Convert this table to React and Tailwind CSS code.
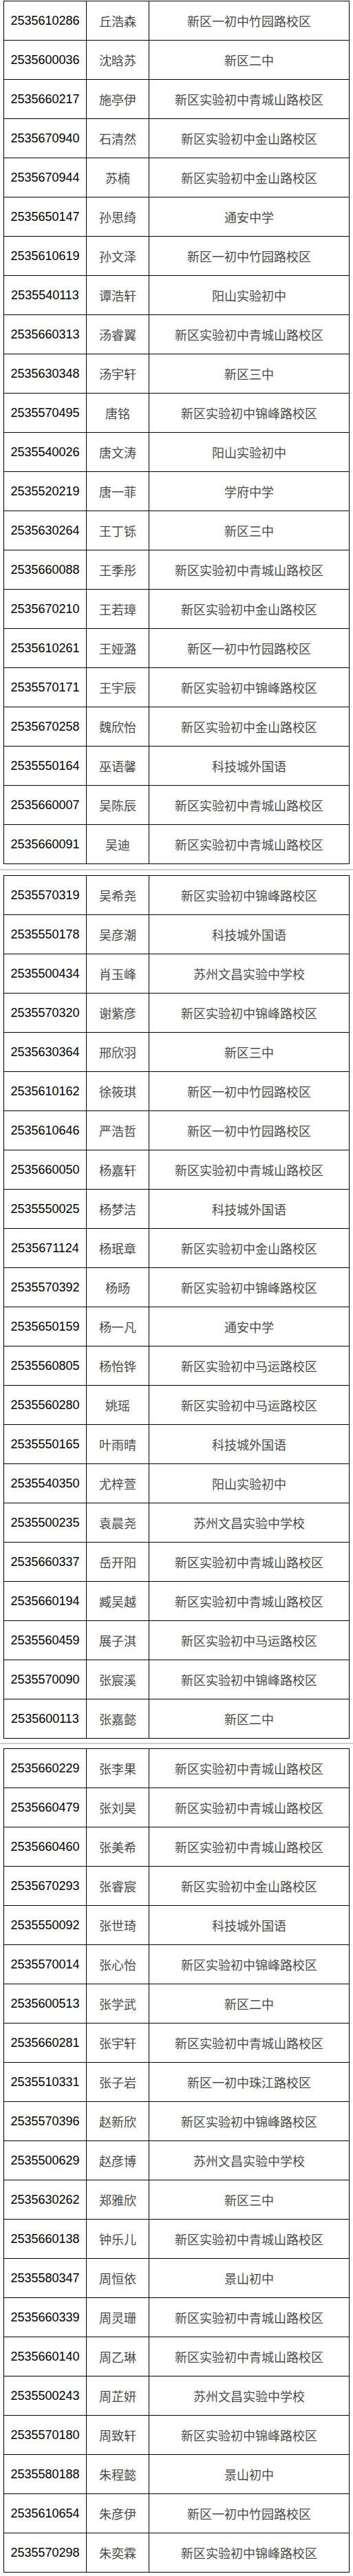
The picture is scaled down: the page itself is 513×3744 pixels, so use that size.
import React from 'react';

const tableOne = [
  ['2535610286', '丘浩森', '新区一初中竹园路校区'],
  ['2535600036', '沈晗苏', '新区二中'],
  ['2535660217', '施亭伊', '新区实验初中青城山路校区'],
  ['2535670940', '石清然', '新区实验初中金山路校区'],
  ['2535670944', '苏楠', '新区实验初中金山路校区'],
  ['2535650147', '孙思绮', '通安中学'],
  ['2535610619', '孙文泽', '新区一初中竹园路校区'],
  ['2535540113', '谭浩轩', '阳山实验初中'],
  ['2535660313', '汤睿翼', '新区实验初中青城山路校区'],
  ['2535630348', '汤宇轩', '新区三中'],
  ['2535570495', '唐铭', '新区实验初中锦峰路校区'],
  ['2535540026', '唐文涛', '阳山实验初中'],
  ['2535520219', '唐一菲', '学府中学'],
  ['2535630264', '王丁铄', '新区三中'],
  ['2535660088', '王季彤', '新区实验初中青城山路校区'],
  ['2535670210', '王若璋', '新区实验初中金山路校区'],
  ['2535610261', '王娅潞', '新区一初中竹园路校区'],
  ['2535570171', '王宇辰', '新区实验初中锦峰路校区'],
  ['2535670258', '魏欣怡', '新区实验初中金山路校区'],
  ['2535550164', '巫语馨', '科技城外国语'],
  ['2535660007', '吴陈辰', '新区实验初中青城山路校区'],
  ['2535660091', '吴迪', '新区实验初中青城山路校区'],
];

const tableTwo = [
  ['2535570319', '吴希尧', '新区实验初中锦峰路校区'],
  ['2535550178', '吴彦潮', '科技城外国语'],
  ['2535500434', '肖玉峰', '苏州文昌实验中学校'],
  ['2535570320', '谢紫彦', '新区实验初中锦峰路校区'],
  ['2535630364', '邢欣羽', '新区三中'],
  ['2535610162', '徐筱琪', '新区一初中竹园路校区'],
  ['2535610646', '严浩哲', '新区一初中竹园路校区'],
  ['2535660050', '杨嘉轩', '新区实验初中青城山路校区'],
  ['2535550025', '杨梦洁', '科技城外国语'],
  ['2535671124', '杨珉章', '新区实验初中金山路校区'],
  ['2535570392', '杨旸', '新区实验初中锦峰路校区'],
  ['2535650159', '杨一凡', '通安中学'],
  ['2535560805', '杨怡铧', '新区实验初中马运路校区'],
  ['2535560280', '姚瑶', '新区实验初中马运路校区'],
  ['2535550165', '叶雨晴', '科技城外国语'],
  ['2535540350', '尤梓萱', '阳山实验初中'],
  ['2535500235', '袁晨尧', '苏州文昌实验中学校'],
  ['2535660337', '岳开阳', '新区实验初中青城山路校区'],
  ['2535660194', '臧吴越', '新区实验初中青城山路校区'],
  ['2535560459', '展子淇', '新区实验初中马运路校区'],
  ['2535570090', '张宸溪', '新区实验初中锦峰路校区'],
  ['2535600113', '张嘉懿', '新区二中'],
];

const tableThree = [
  ['2535660229', '张李果', '新区实验初中青城山路校区'],
  ['2535660479', '张刘昊', '新区实验初中青城山路校区'],
  ['2535660460', '张美希', '新区实验初中青城山路校区'],
  ['2535670293', '张睿宸', '新区实验初中金山路校区'],
  ['2535550092', '张世琦', '科技城外国语'],
  ['2535570014', '张心怡', '新区实验初中锦峰路校区'],
  ['2535600513', '张学武', '新区二中'],
  ['2535660281', '张宇轩', '新区实验初中青城山路校区'],
  ['2535510331', '张子岩', '新区一初中珠江路校区'],
  ['2535570396', '赵新欣', '新区实验初中锦峰路校区'],
  ['2535500629', '赵彦博', '苏州文昌实验中学校'],
  ['2535630262', '郑雅欣', '新区三中'],
  ['2535660138', '钟乐儿', '新区实验初中青城山路校区'],
  ['2535580347', '周恒依', '景山初中'],
  ['2535660339', '周灵珊', '新区实验初中青城山路校区'],
  ['2535660140', '周乙琳', '新区实验初中青城山路校区'],
  ['2535500243', '周芷妍', '苏州文昌实验中学校'],
  ['2535570180', '周致轩', '新区实验初中锦峰路校区'],
  ['2535580188', '朱程懿', '景山初中'],
  ['2535610654', '朱彦伊', '新区一初中竹园路校区'],
  ['2535570298', '朱奕霖', '新区实验初中锦峰路校区'],
];

const cjk = "font-['Noto_Sans_CJK_SC',sans-serif] text-[18px] text-[#4a4a4a]";

function Row({ id, name, school }) {
  return (
    <div className="grid h-[57px] grid-cols-[120px_91px_291px] border-b border-black">
      <div className="flex items-center justify-center border-r border-black font-['Liberation_Sans',Arial,sans-serif] text-[18px] text-black">
        {id}
      </div>
      <div className={`flex items-center justify-center border-r border-black ${cjk}`}>
        {name}
      </div>
      <div className={`flex items-center justify-center border-r border-black ${cjk}`}>
        {school}
      </div>
    </div>
  );
}

function ScoreTable({ rows }) {
  return (
    <div className="ml-[5px] w-[503px] border-l border-t border-black">
      {rows.map(([id, name, school]) => (
        <Row key={id} id={id} name={name} school={school} />
      ))}
    </div>
  );
}

function Divider() {
  return <div className="h-[2px] w-full bg-[#cfcfcf]" />;
}

export default function App() {
  return (
    <div className="min-h-[3744px] w-[513px] bg-white pt-[1px]">
      <ScoreTable rows={tableOne} />
      <div className="py-[7px]">
        <Divider />
      </div>
      <ScoreTable rows={tableTwo} />
      <div className="py-[6px]">
        <Divider />
      </div>
      <ScoreTable rows={tableThree} />
    </div>
  );
}
